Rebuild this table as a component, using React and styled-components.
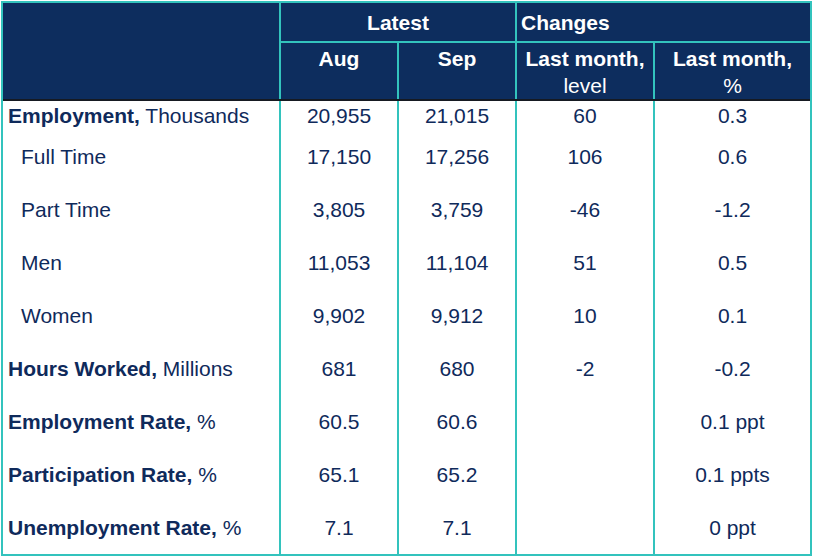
import React from "react";
import styled, { createGlobalStyle } from "styled-components";

const Global = createGlobalStyle`
  html, body { margin: 0; padding: 0; background: #ffffff; }
  body { font-family: "Liberation Sans", Arial, sans-serif; }
`;

const COLS = "276px 116px 116px 136px 155px";
const NAVY = "#0d2d5e";
const TEAL = "#33c3bd";
const INK = "#0f2a5b";

const Frame = styled.div`
  margin: 1px 0 0 1px;
  width: 811px;
  box-sizing: border-box;
  background: ${TEAL};
  padding: 2px;
  display: flex;
  flex-direction: column;
`;

const Head = styled.div`
  display: grid;
  grid-template-columns: ${COLS};
  grid-template-rows: 38px 56px;
  column-gap: 2px;
  row-gap: 2px;
`;

const HeadCell = styled.div`
  background: ${NAVY};
  color: #ffffff;
  font-weight: 700;
  font-size: 21px;
  line-height: 27px;
  text-align: ${(p) => p.$align || "center"};
  padding: ${(p) => (p.$top ? "2px 3px 0" : "0 4px")};
  display: flex;
  flex-direction: column;
  justify-content: ${(p) => (p.$top ? "flex-start" : "center")};
  grid-column: ${(p) => p.$span || "auto"};
  grid-row: ${(p) => p.$rows || "auto"};
  white-space: nowrap;
`;

const Rule = styled.div`
  height: 2px;
  background: #161a22;
`;

const Body = styled.div`
  display: grid;
  grid-template-columns: ${COLS};
  column-gap: 2px;
  row-gap: 0;
`;

const Cell = styled.div`
  background: #ffffff;
  color: ${INK};
  font-size: 21px;
  height: ${(p) => p.$h}px;
  line-height: ${(p) => p.$h}px;
  text-align: ${(p) => (p.$label ? "left" : "center")};
  padding-left: ${(p) => (p.$label ? (p.$indent ? "18px" : "5px") : "0")};
  white-space: nowrap;
  overflow: hidden;
`;

const Strong = styled.b`
  font-weight: 700;
`;

const rows = [
  { b: "Employment,", r: " Thousands", v: ["20,955", "21,015", "60", "0.3"] },
  { r: "Full Time", indent: true, v: ["17,150", "17,256", "106", "0.6"] },
  { r: "Part Time", indent: true, v: ["3,805", "3,759", "-46", "-1.2"] },
  { r: "Men", indent: true, v: ["11,053", "11,104", "51", "0.5"] },
  { r: "Women", indent: true, v: ["9,902", "9,912", "10", "0.1"] },
  { b: "Hours Worked,", r: " Millions", v: ["681", "680", "-2", "-0.2"] },
  { b: "Employment Rate,", r: " %", v: ["60.5", "60.6", "", "0.1 ppt"] },
  { b: "Participation Rate,", r: " %", v: ["65.1", "65.2", "", "0.1 ppts"] },
  { b: "Unemployment Rate,", r: " %", v: ["7.1", "7.1", "", "0 ppt"] },
];

export default function App() {
  return (
    <>
      <Global />
      <Frame>
        <Head>
          <HeadCell $rows="1 / span 2" />
          <HeadCell $span="2 / span 2">Latest</HeadCell>
          <HeadCell $span="4 / span 2" $align="left">Changes</HeadCell>
          <HeadCell $top>Aug</HeadCell>
          <HeadCell $top>Sep</HeadCell>
          <HeadCell $top>
            <span>Last month,</span>
            <span style={{ fontWeight: 400 }}>level</span>
          </HeadCell>
          <HeadCell $top>
            <span>Last month,</span>
            <span style={{ fontWeight: 400 }}>%</span>
          </HeadCell>
        </Head>
        <Rule />
        <Body>
          {rows.map((row, i) => {
            const h = i === 0 ? 29 : 53;
            return (
              <React.Fragment key={i}>
                <Cell $h={h} $label $indent={row.indent}>
                  {row.b && <Strong>{row.b}</Strong>}
                  {row.r}
                </Cell>
                {row.v.map((val, j) => (
                  <Cell key={j} $h={h}>
                    {val}
                  </Cell>
                ))}
              </React.Fragment>
            );
          })}
        </Body>
      </Frame>
    </>
  );
}
